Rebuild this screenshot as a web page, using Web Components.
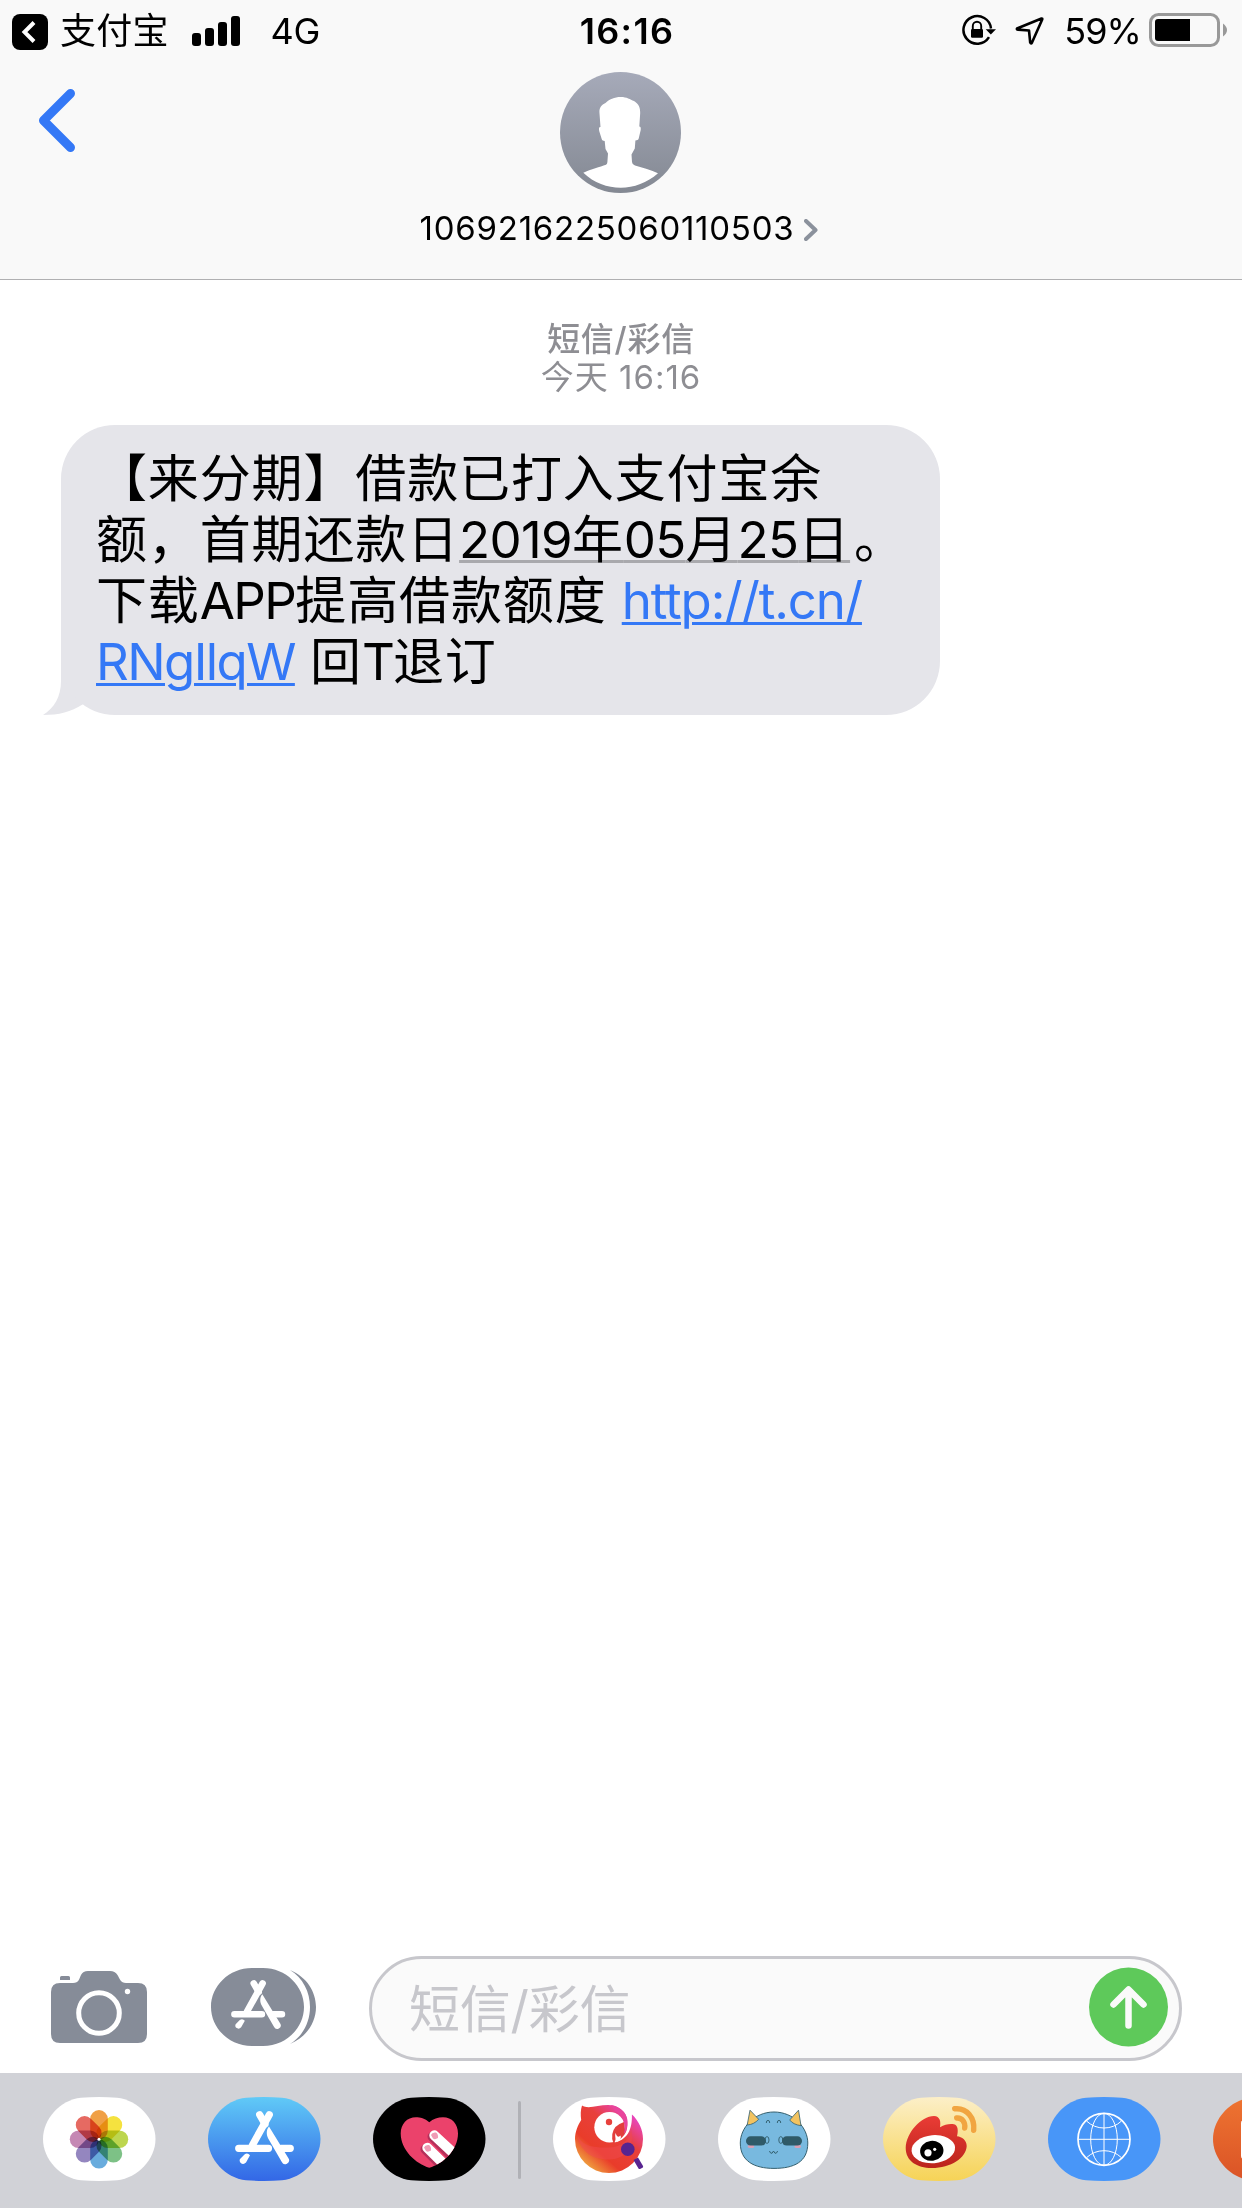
<!DOCTYPE html>
<html lang="zh-CN">
<head>
  <meta charset="utf-8">
  <title>Messages</title>
  <style>
    body { margin: 0; font-family: Inter, "Noto Sans CJK SC", sans-serif; color: #000; background: #fff; text-spacing-trim: space-all; }
    .num { letter-spacing: -.7px; }
    .word { letter-spacing: -1.600px; }
    .cap { letter-spacing: -2px; }
  </style>
  <script>
    window.onload = () => {
      // small helper, every element here is markup + style only
      const define = (name, html) => {
        customElements.define(name, class extends HTMLElement {
          constructor() {
            super();
            this.attachShadow({mode: 'open'}).innerHTML = html;
          }
        });
      };

      define('status-bar', `<style>
    :host { display: grid; grid-template-columns: 1fr auto 1fr; align-items: center; height: 60px; font-size: 36px; line-height: 44px; }
    .left, .right { display: flex; align-items: center; }
    .left { padding: 4px 0 0 12px; }
    .right { justify-content: flex-end; padding: 0 15px 0 0; }
    svg { display: block; flex: none; }
    .app { margin-left: 12px; letter-spacing: .2px; margin-top: -3px; }
    .bars { margin: -3px 0 0 23px; }
    .net { margin: -3px 0 0 31px; letter-spacing: -.3px; }
    .time { font-weight: 600; letter-spacing: 1.300px; padding: 2px 0 0 12px; }
    .pct { margin: 2px 8px 0 19px; letter-spacing: -.9px; }
    .loc { margin-left: 15px; } </style>
<div class="left">
  <svg width="36" height="36"><rect width="36" height="36" rx="8"/><path d="M22 8.5L12.500 18L22 27.500" fill="none" stroke="#fff" stroke-width="4"/></svg>
  <span class="app"><slot name="app"></slot></span>
  <svg class="bars" width="48" height="30"><rect y="17" width="9" height="13" rx="3"/><rect x="13" y="12" width="9" height="18" rx="3"/><rect x="26" y="6" width="9" height="24" rx="3"/><rect x="39" width="9" height="30" rx="3"/></svg>
  <span class="net"><slot name="network"></slot></span>
</div>
<div class="time"><slot name="time"></slot></div>
<div class="right">
  <svg width="37" height="32"><path d="M28 23.200A13.800 13.800 0 1 1 30 14.500" fill="none" stroke="#000" stroke-width="2.500"/><path d="M24.700 15.200H35L29.800 20.400Z"/><rect x="10" y="15" width="12" height="8.800" rx="1.200"/><path d="M11.800 15.500V12A4.200 4.200 0 0 1 20.200 12V15.500" fill="none" stroke="#000" stroke-width="1.900"/></svg>
  <svg class="loc" width="32" height="32"><path d="M28.500 4.500L4 14.500Q3.500 15.500 5 15.600L16 16.500L17.200 28.500Q18 30.300 19 28.500L29.200 5.500Q29.500 4.200 28.500 4.500Z" fill="none" stroke="#000" stroke-width="2.600" stroke-linejoin="round"/></svg>
  <span class="pct"><slot name="battery"></slot></span>
  <svg width="78" height="34"><rect x="1.500" y="1.500" width="68" height="31" rx="8" fill="none" stroke="#999" stroke-width="3"/><path d="M6 9Q6 6 9 6H41V28H9Q6 28 6 25Z"/><path d="M74 10.500Q78 13.500 78 17T74 23.500Z" fill="#999"/></svg>
</div>`);

      define('nav-bar', `<style>
    :host { display: block; box-sizing: border-box; height: 280px; background: #f9f9f9; border-bottom: 1px solid #b0b0b2; }
    .nav { display: grid; grid-template-columns: 1fr auto 1fr; align-items: start; padding-top: 12px; }
    .back { margin: 16px 0 0 38px; }
    svg { display: block; }
    .contact { display: flex; flex-direction: column; align-items: center; }
    .avatar { margin-right: 1px; }
    .row { display: flex; align-items: center; gap: 10px; margin: 14px 4px 0 0; font-size: 33px; line-height: 42px; letter-spacing: .75px; }
    .row svg { margin-top: 4px; } </style>
<slot name="status"></slot>
<div class="nav">
  <svg class="back" width="38" height="64"><path d="M32.500 5.500L5.500 32.500L32.500 59.500" fill="none" stroke="#3478f6" stroke-width="9" stroke-linecap="round" stroke-linejoin="round"/></svg>
  <div class="contact">
    <svg class="avatar" width="121" height="121"><defs><linearGradient id="g" x2="0" y2="1"><stop stop-color="#a6aab9"/><stop offset="1" stop-color="#848993"/></linearGradient></defs>
      <circle cx="60.500" cy="60.500" r="60.500" fill="url(#g)"/>
      <path fill="#fff" d="M60.700 25C67 25 70 27.500 74 29C79 32 80.300 36 80.200 41L79.300 54.500C80.500 54.500 81 55.500 80.700 58L78.700 66.500C78.300 68 77 68.300 75.400 68.500L74.800 76.500L71.500 82.500L72 90Q72 92.300 75 93.500C83 96 91 98 98 101.300C87 111 74 115.700 60.700 115.700S34 111 23.300 100.700C31 97 40 95 46 92.700Q47.300 92 47.400 90L48 81.500L45.500 77L44.700 69C43 68.800 42.200 68.500 41.700 67L39.200 59C38.700 56 39 54.800 40.500 55L39.400 40C39.300 36 41.500 32.500 45.500 31C49 27.500 54.500 25 60.700 25Z"/></svg>
    <div class="row"><slot></slot><svg width="14" height="22"><path d="M2 2L11.500 11L2 20" fill="none" stroke="#8b919c" stroke-width="4" stroke-linecap="round" stroke-linejoin="round"/></svg></div>
  </div>
</div>`);

      define('message-stamp', `<style>
    :host { display: block; text-align: center; color: #8e8e93; font-size: 33px; line-height: 39px; letter-spacing: .7px; }
    .service { font-weight: 500; }
    .when { letter-spacing: 1px; margin-top: -1px; } </style>
<div class="service"><slot name="service"></slot></div>
<div class="when"><slot></slot></div>`);

      define('message-bubble', `<style>
    :host { display: block; width: max-content; position: relative; z-index: 0; }
    .text { box-sizing: border-box; width: 879px; height: 290px; padding: 23px 35px; border-radius: 54px; background: #e5e5ea; font-size: 51px; line-height: 61px; letter-spacing: .87px; white-space: nowrap; }
    .tail { position: absolute; z-index: -1; left: -18px; bottom: 0; }
    ::slotted(a) { color: #3478f6; letter-spacing: -1.150px; text-decoration: underline; text-decoration-thickness: 3px; text-underline-offset: 3px; }
    ::slotted(u) { margin-right: 4px; text-decoration: underline 3px #a9a9ad; text-underline-offset: 2px; text-decoration-skip-ink: none; } </style>
<svg class="tail" width="80" height="60"><path d="M18 0V26C18 42 11 53 0 60C16 60 28 57 39.500 49.500L60 40V0Z" fill="#e5e5ea"/></svg>
<div class="text"><slot></slot></div>`);

      // the A of the store logo, used by the composer button and by the dock
      const storeLogo = `<g fill="none" stroke="#fff" stroke-width="7.200" stroke-linecap="round"><path d="M61.300 17.700L44.500 48"/><path d="M51.700 17.700L57 27"/><path d="M30.700 51.300H60.500M73 51.300H82.300"/></g><path fill="#fff" d="M61 29.500C58 33 58.300 38 60.200 41.500L73.800 65A3.800 3.800 0 0 0 80.600 61.500ZM36.500 57.500Q39.500 55.300 42 58.300L38 65.500Q35.500 68 32.700 66Q31 64.300 32 62Z"/>`;

      define('message-composer', `<style>
    :host { display: flex; align-items: center; padding: 0 60px 12px 51px; }
    svg { display: block; flex: none; }
    .store { margin: -3px 53px 0 64px; }
    .camera { margin-top: -3px; }
    .field { flex: 1; box-sizing: border-box; height: 105px; display: flex; align-items: center; justify-content: space-between; padding: 0 11px 0 37px; border: 3px solid #c7c7cc; border-radius: 53px; background: #fafafa; color: #c7c7cc; font-size: 51px; line-height: 60px; letter-spacing: -.2px; }
    .field ::slotted(span) { padding-top: 2px; }
    .send { margin-top: -3px; } </style>
<svg class="camera" width="96" height="72"><path fill="#868c98" d="M0 21Q0 12 9 12H22C28 12 28 8 30 4Q32 0 37 0H59Q64 0 66.500 4C69 8 69.500 12 75 12H87Q96 12 96 21V63Q96 72 87 72H9Q0 72 0 63ZM9 9V6.500Q9 5 10.500 5H17.500Q19 5 19 6.500V9Z"/><circle cx="48" cy="42" r="20.300" fill="none" stroke="#fff" stroke-width="5"/><circle cx="76.500" cy="20.500" r="2.700" fill="#fff"/></svg>
<svg class="store" width="105" height="78"><path fill="#868c98" d="M0 39C0 18 18 0 41 0H52C75 0 93 18 93 39S75 78 52 78H41C18 78 0 60 0 39ZM79 2C96 9 105 24 105 39S96 69 79 76C92 68 99 54 99 39S92 10 79 2Z"/><g transform="translate(-4.800 -.9) scale(.92)">${storeLogo}</g></svg>
<div class="field"><slot></slot>
  <svg class="send" width="79" height="80"><circle cx="39.500" cy="40" r="39.500" fill="#5ec95a"/><path d="M39.500 58.500V24M24.500 37.500L39.500 22.500L54.500 37.500" fill="none" stroke="#fafafa" stroke-width="6.500" stroke-linecap="round" stroke-linejoin="round"/></svg>
</div>`);

      const petals = ['#f0a046', '#f5e23f', '#bdd64f', '#7dc186', '#69acdd', '#9486bf', '#c588b4', '#e66a62'];
      const icons = {
        photos: `<g transform="translate(56 42.300)" style="isolation:isolate">${petals.map((c, i) => `<rect x="-8.800" y="-29.200" width="17.600" height="29.200" rx="8.800" fill="${c}" transform="rotate(${i * 45})" style="mix-blend-mode:multiply"/>`).join('')}<circle r="1.500" fill="#fff"/></g>`,
        store: storeLogo,
        touch: `<defs><clipPath id="h"><path d="M56.300 25.300C52 21.500 47 20.300 43 20.300C34 20.300 27.700 27 27.700 36.500C27.700 53 43 67 56.300 70.700C70 67 85 53 85 36.500C85 27 79 20.300 70 20.300C65 20.300 60 22 56.300 25.300Z"/></clipPath></defs>
<g clip-path="url(#h)"><rect width="112" height="84" fill="#eb426b"/><g fill="none" stroke-width="10" stroke-linecap="round"><path d="M59.500 39.800L86 66M52.500 52.200L78 78" stroke="#b5305a"/><path d="M61.300 38.300L90 65M54.300 50.700L80 76" stroke="#fff"/></g><path d="M58 38Q59 35 63 35.500Q65.500 37 65 41Q62 43 60 41.500ZM51 50.500Q52 47.500 56 48Q58.500 49.500 58 53.500Q55 55.500 53 54Z" fill="#f09bb5"/></g>`,
        parrot: `<defs><linearGradient id="p" x1=".9" y1=".15" x2=".2" y2=".95"><stop stop-color="#e845cc"/><stop offset=".35" stop-color="#e8403c"/><stop offset=".72" stop-color="#e93c2a"/><stop offset="1" stop-color="#f0a840"/></linearGradient></defs>
<path fill="url(#p)" d="M29 8.500C35 12.500 45 8 55 8C65 8 73 14 75.500 24L78.700 17.300C86 24 90 33 90 42A34 34 0 0 1 22 42C22 35 25 28 28.200 23C27.500 18 27.500 13 29 8.500Z"/>
<path d="M24 36C27 48 38 51 56 50.500C70 50 77 42 78 32C82 48 74 62 57 62.500C39 63 26 54 24 36Z" fill="#f04a50" opacity=".5"/>
<circle cx="56.500" cy="30.300" r="15.200" fill="#fff"/><circle cx="56" cy="25" r="3.200" fill="#e8403c"/>
<path d="M71 25Q61 28 59.300 37Q58.500 42 60.500 46Q69 43 72.500 36Z" fill="#e23e3c"/>
<path d="M62.800 36C63.500 40 66 40.500 67.500 38.500C69 42 66 45 61.500 45.200C64 42 61 39 62.800 36Z" fill="#fff"/>
<path d="M70 11L78.700 14C80 30 76 42 62 45.500C70 41 74.500 36 74.300 28C74.200 21 73 16 70 11Z" fill="#fff"/>
<path d="M58 8C69 10 76.500 19 74.300 29Q73.500 34 71 37C73.500 27 70 18 62 14Z" fill="#e8459c"/>
<circle cx="74.800" cy="52.300" r="6.800" fill="#582490"/><path d="M80.500 63L85 60.500L90 69Q90.500 70 89.500 70.700L87 72Q86 72.300 85.500 71.500Z" fill="#582490"/>`,
        monster: `<path d="M56 15C76 15 89.800 31 89.800 46C89.800 65 76 71.400 56 71.400S22.300 64 22.300 46C22.300 31 36 15 56 15Z" fill="#78b9df" stroke="#35606f"/>
<path d="M32 13.200L40.700 22.300Q36 27.500 29.200 28ZM80.500 13.200L71.700 23Q75 27.500 83 28.700Z" fill="#f3c35f" stroke="#35606f" stroke-width=".8" stroke-linejoin="round"/>
<ellipse cx="33" cy="49.400" rx="3.300" ry="1.700" fill="#d9a0b4"/><ellipse cx="79.700" cy="49.400" rx="3.300" ry="1.700" fill="#d9a0b4"/>
<rect x="28" y="39.300" width="20" height="9.200" rx="4.600" fill="#2f5a68"/><rect x="64" y="39.300" width="20" height="9.200" rx="4.600" fill="#2f5a68"/>
<g fill="none" stroke="#2f5a68" stroke-width=".9"><ellipse cx="49" cy="43" rx="2" ry="3.400"/><ellipse cx="62.800" cy="43" rx="2" ry="3.400"/><path d="M48.300 26Q48.300 23.300 50 23.300T51.700 26M59.300 26Q59.300 23.300 61 23.300T62.700 26M51.500 54Q52 56.500 54 56.300L55.500 54L57 56.300Q59 56.500 59.600 54"/></g>`,
        weibo: `<defs><linearGradient id="w" x2="0" y2="1"><stop stop-color="#ea3c36"/><stop offset="1" stop-color="#bb241c"/></linearGradient></defs>
<path fill="url(#w)" d="M22.700 51C23 36 38 19 51 19C57 19.500 58 24 57 30.300C62 27.500 66 26.500 71 27.200C75 28 75.500 34 74 39.300C79 40 83.500 43 83.700 49C83 61 68 71 48.700 71C34 71 22.700 64 22.700 51Z"/>
<ellipse cx="50.300" cy="52.200" rx="21.800" ry="14" fill="#fff" transform="rotate(-5 50.300 52.200)"/><ellipse cx="48.800" cy="53.800" rx="11.700" ry="10" transform="rotate(-8 48.800 53.800)"/><circle cx="45" cy="55.800" r="3.600" fill="#fff"/><circle cx="51.700" cy="52.300" r="1.600" fill="#fff"/>
<path d="M71.700 11.800C84 10.500 92 21 90.700 33.200M73.700 21C79 20.500 82.500 25 81.700 31" fill="none" stroke="#f1a541" stroke-width="5.400" stroke-linecap="round"/>`,
        globe: `<g fill="none" stroke="#fff" stroke-width="1"><circle cx="56" cy="42.300" r="26" stroke-width="1.700"/><ellipse cx="56" cy="42.300" rx="13.300" ry="26"/><path d="M56 16V68.500M30 42.300H82M38.500 24Q46 31 56 31T73.500 24M38.500 60.700Q46 53.700 56 53.700T73.500 60.700"/></g>`,
        taobao: `<rect x="28" y="23" width="56" height="39" rx="3" fill="#fff"/>`
      };

      class DockApp extends HTMLElement {
        constructor() {
          super();
          const shadow = this.attachShadow({mode: 'open'});
          shadow.innerHTML = `<style>
    :host { display: block; flex: none; width: 113px; height: 84px; margin-right: -1px; }
    svg { display: block; } </style>
<svg width="113" height="84"><defs><linearGradient id="bg" x2="0" y2="1"><stop stop-color="${this.getAttribute('from') || '#fff'}"/><stop offset="1" stop-color="${this.getAttribute('to') || this.getAttribute('from') || '#fff'}"/></linearGradient></defs>
<path fill="url(#bg)" d="M0 42C0 22 17 3 38 .7Q56 -.7 74 .7C95 3 112.500 22 112.500 42S95 81 74 83.300Q56 84.700 38 83.300C17 81 0 62 0 42Z"/>${icons[this.getAttribute('icon')]}</svg>`;
        }
      }
      customElements.define('dock-app', DockApp);

      define('app-dock', `<style>
    :host { display: flex; align-items: flex-start; box-sizing: border-box; height: 135px; padding: 24px 0 0 43px; background: #d1d2d7; overflow: hidden; gap: 53px; }
    ::slotted(hr) { flex: none; width: 3px; height: 78px; margin: 4px -21px 0 -20px; border: 0; border-radius: 2px; background: #b0b1b6; } </style>
<slot></slot>`);

      define('message-screen', `<style>
    :host { display: flex; flex-direction: column; height: 2208px; overflow: hidden; }
    main { flex: 1; padding: 40px 0 0; }
    ::slotted(message-bubble) { margin: 28px 0 0 61px; } </style>
<slot name="header"></slot>
<main><slot></slot></main>
<slot name="footer"></slot>`);
    }
  </script>
</head>
<body>
  <message-screen>
    <nav-bar slot="header">
      <status-bar slot="status">
        <span slot="app">支付宝</span>
        <span slot="network">4G</span>
        <span slot="time">16:16</span>
        <span slot="battery">59%</span>
      </status-bar>
      <span>1069216225060110503</span>
    </nav-bar>

    <message-stamp><span slot="service">短信/彩信</span>今天 16:16</message-stamp>
    <message-bubble>【来分期】借款已打入支付宝余<br>额，首期还款日<u><span class="num">2019</span>年<span class="num">05</span>月<span class="num">25</span>日</u>。<br>下载<span class="word">APP</span>提高借款额度 <a>http://t.cn/</a><br><a style="letter-spacing: -1.600px">RNgIlqW</a> 回<span class="cap">T</span>退订</message-bubble>

    <message-composer slot="footer"><span>短信/彩信</span></message-composer>
    <app-dock slot="footer">
      <dock-app icon="photos"></dock-app>
      <dock-app icon="store" from="#60caf7" to="#3367e6"></dock-app>
      <dock-app icon="touch" from="#000"></dock-app>
      <hr>
      <dock-app icon="parrot"></dock-app>
      <dock-app icon="monster"></dock-app>
      <dock-app icon="weibo" from="#fcefc8" to="#f6d356"></dock-app>
      <dock-app icon="globe" from="#4896f8"></dock-app>
      <dock-app icon="taobao" from="#ee7431" to="#da5326"></dock-app>
    </app-dock>
  </message-screen>
</body>
</html>
